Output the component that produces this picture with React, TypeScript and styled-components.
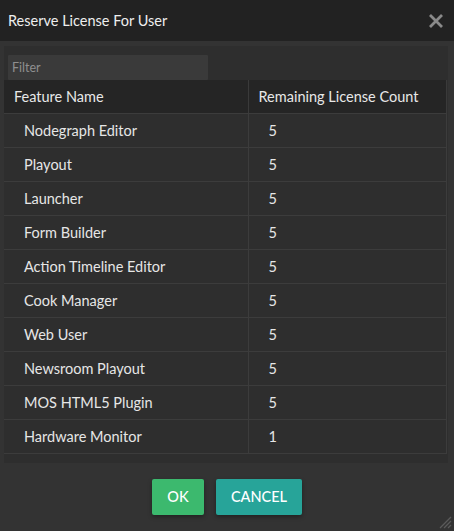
import styled, { createGlobalStyle } from "styled-components";

const GlobalStyle = createGlobalStyle`
  html, body {
    margin: 0;
    padding: 0;
    background-color: #333333;
  }

  * {
    box-sizing: border-box;
  }
`;

const Dialog = styled.div`
  position: relative;
  width: 454px;
  height: 531px;
  display: flex;
  flex-direction: column;
  background-color: #333333;
  font-family: "Lato", "Open Sans", sans-serif;
  color: #e6e6e6;
`;

const Header = styled.div`
  height: 41px;
  flex-shrink: 0;
  display: flex;
  align-items: center;
  justify-content: space-between;
  padding: 0 10px 0 8px;
  background-color: #222222;
`;

const Title = styled.h1`
  margin: 0;
  font-size: 14.5px;
  font-weight: 400;
  color: #eeeeee;
`;

const CloseButton = styled.button`
  width: 17px;
  height: 17px;
  padding: 0;
  border: none;
  background: transparent;
  cursor: pointer;
  display: flex;
  align-items: center;
  justify-content: center;
`;

const Body = styled.div`
  padding: 5px 6px 0 4px;
`;

const Panel = styled.div`
  background-color: #2e2e2e;
  padding: 9px 0 9px 0;
`;

const FilterInput = styled.input`
  display: block;
  width: 200px;
  height: 25px;
  margin-left: 4px;
  padding: 0 4px;
  border: none;
  outline: none;
  border-radius: 1px;
  background-color: #3a3a3a;
  color: #dddddd;
  font-family: inherit;
  font-size: 12.5px;

  &::placeholder {
    color: #8f8f8f;
  }
`;

const Table = styled.table`
  width: 443px;
  border-collapse: collapse;
  font-size: 14.5px;
`;

const HeadCell = styled.th<{ first?: boolean }>`
  height: 33px;
  padding: 0 0 0 10px;
  text-align: left;
  font-weight: 400;
  color: #e8e8e8;
  background-color: #252525;
  border-bottom: 1px solid #3c3c3c;
  border-right: 1px solid #3a3a3a;
  width: ${({ first }) => (first ? "244px" : "auto")};
`;

const Cell = styled.td`
  height: 34px;
  padding: 0 0 0 20px;
  color: #e6e6e6;
  border-bottom: 1px solid #3c3c3c;
  border-right: 1px solid #3c3c3c;
`;

const Footer = styled.div`
  display: flex;
  justify-content: center;
  gap: 12px;
  padding-top: 16px;
`;

const Button = styled.button<{ variant: "ok" | "cancel" }>`
  height: 36px;
  padding: 0 14px;
  min-width: ${({ variant }) => (variant === "ok" ? "52px" : "86px")};
  border: none;
  border-radius: 2px;
  color: #ffffff;
  font-family: inherit;
  font-size: 14.5px;
  font-weight: 500;
  cursor: pointer;
  background-color: ${({ variant }) =>
    variant === "ok" ? "#3cb96e" : "#27a499"};
  box-shadow: 0 2px 4px rgba(0, 0, 0, 0.35);
`;

const Grip = styled.svg`
  position: absolute;
  right: 2px;
  bottom: 2px;
`;

const features = [
  { name: "Nodegraph Editor", count: 5 },
  { name: "Playout", count: 5 },
  { name: "Launcher", count: 5 },
  { name: "Form Builder", count: 5 },
  { name: "Action Timeline Editor", count: 5 },
  { name: "Cook Manager", count: 5 },
  { name: "Web User", count: 5 },
  { name: "Newsroom Playout", count: 5 },
  { name: "MOS HTML5 Plugin", count: 5 },
  { name: "Hardware Monitor", count: 1 },
];

export default function App() {
  return (
    <>
      <GlobalStyle />
      <Dialog>
        <Header>
          <Title>Reserve License For User</Title>
          <CloseButton aria-label="Close">
            <svg width="16" height="16" viewBox="0 0 16 16">
              <path
                d="M2 2 L14 14 M14 2 L2 14"
                stroke="#8a8a8a"
                strokeWidth="2.8"
              />
            </svg>
          </CloseButton>
        </Header>

        <Body>
          <Panel>
            <FilterInput placeholder="Filter" />
            <Table>
              <thead>
                <tr>
                  <HeadCell first>Feature Name</HeadCell>
                  <HeadCell>Remaining License Count</HeadCell>
                </tr>
              </thead>
              <tbody>
                {features.map((f) => (
                  <tr key={f.name}>
                    <Cell>{f.name}</Cell>
                    <Cell>{f.count}</Cell>
                  </tr>
                ))}
              </tbody>
            </Table>
          </Panel>
        </Body>

        <Footer>
          <Button variant="ok">OK</Button>
          <Button variant="cancel">CANCEL</Button>
        </Footer>

        <Grip width="14" height="14" viewBox="0 0 14 14">
          <path
            d="M2 13 L13 2 M6 13 L13 6 M10 13 L13 10"
            stroke="#5a5a5a"
            strokeWidth="1.3"
          />
        </Grip>
      </Dialog>
    </>
  );
}
